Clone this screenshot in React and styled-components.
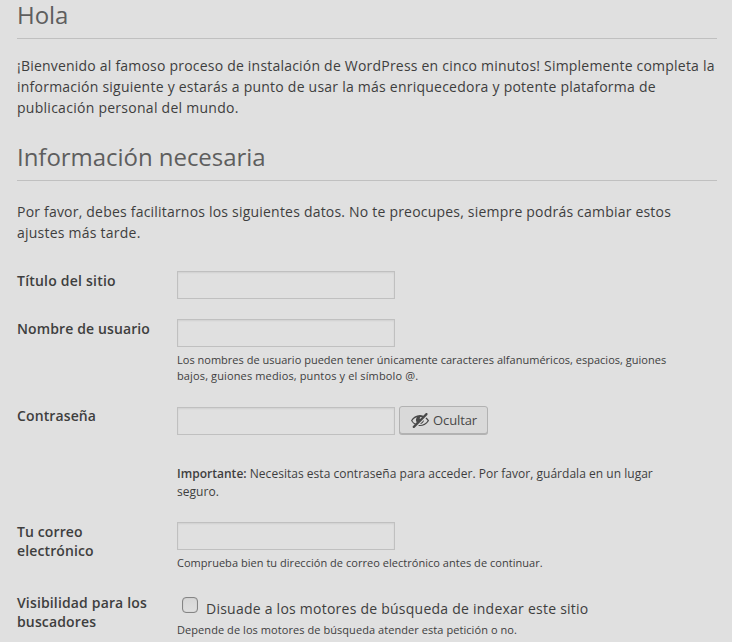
import React from "react";
import styled, { createGlobalStyle } from "styled-components";

const Global = createGlobalStyle`
  * { box-sizing: border-box; }
  html { background: #e0e0e0; }
  body { margin: 0; height: 642px; overflow: hidden; color: #3e3e3e; font: 14px/21px "Open Sans", sans-serif; }
`;
const Page = styled.main`width: 700px; margin-left: 17px;`;
const Heading = styled.h1`
  margin: 0; height: ${p => p.$height}px;
  border-bottom: 1px solid #c0c0c0; color: #5e5e5e; font-size: 24px; line-height: ${p => p.$line || 32}px;
  font-weight: 400; letter-spacing: -0.04px;
`;
const Intro = styled.p`margin: ${p => p.$top}px 0 ${p => p.$bottom}px; white-space: nowrap;`;
const Line = styled.span`display: block; letter-spacing: ${p => p.$track}px;`;
const Form = styled.form`display: flex; flex-direction: column;`;
const Row = styled.div`display: grid; grid-template-columns: 160px 1fr; height: ${p => p.$height}px;`;
const Label = styled.label`
  font-weight: 600; line-height: 19px; letter-spacing: ${p => p.$track || 0.12}px;
  margin-top: ${p => p.$shift || 0}px; white-space: nowrap;
`;
const Field = styled.div`display: flex; flex-direction: column; align-items: flex-start;`;
const Controls = styled.div`display: flex; height: 28px; gap: 4px;`;
const Input = styled.input`
  width: 218px; height: 28px; margin: 0; padding: 3px 5px; border: 1px solid #c0c0c0;
  border-radius: 0; background: #e0e0e0; box-shadow: inset 0 1px 2px rgba(0,0,0,.07); outline: none;
`;
const Button = styled.button`
  display: flex; align-items: center; gap: 3px; width: 89px; height: 28px; margin: -1px 0 0; padding: 0 0 0 10px;
  border: 1px solid #b2b2b2; border-radius: 3px; background: #d9d9d9; box-shadow: 0 1px 0 #b2b2b2;
  color: #484848; font: 13px/26px "Open Sans", sans-serif; letter-spacing: -0.1px;
`;
const Hint = styled.p`margin: ${p => p.$top}px 0 0; font-size: ${p => p.$size || 11}px; line-height: ${p => p.$line || 16}px; white-space: nowrap;`;
const CheckLine = styled.label`display: flex; align-items: flex-start; gap: 8px; padding: 4px 0 0 5px; line-height: 23px; letter-spacing: 0.24px;`;
const Check = styled.input`
  appearance: none; width: 16px; height: 16px; margin: 0; border: 1px solid #858585;
  border-radius: 4px; background: linear-gradient(#d7d7d7, #e0e0e0); box-shadow: inset 0 0 1px rgba(0,0,0,.3);
`;
const Strong = styled.strong`font-weight: 600;`;
const Icon = styled.svg`flex: none; width: 20px; height: 20px; fill: currentColor;`;

function HiddenIcon() {
  return (
    <Icon viewBox="0 0 20 20" aria-hidden="true">
      <path d="M17.3 3.3c-.4-.4-1.1-.4-1.6 0l-2.4 2.4c-1.1-.4-2.2-.6-3.3-.6-3.8.1-7.2 2.1-9 5.4.2.4.5.8.8 1.2.8 1.1 1.8 2 2.9 2.7L3 16.1c-.4.4-.5 1.1 0 1.6.4.4 1.1.5 1.6 0L17.3 4.9c.4-.5.4-1.2 0-1.6zm-10.6 9l-1.3 1.3c-1.2-.7-2.3-1.7-3.1-2.9C3.5 9 5.1 7.8 7 7.2c-1.3 1.4-1.4 3.6-.3 5.1zM10.1 9c-.5-.5-.4-1.3.1-1.8.5-.4 1.2-.4 1.7 0L10.1 9zm8.2.5c-.5-.7-1.1-1.4-1.8-1.9l-1 1c.8.6 1.5 1.3 2.1 2.2C15.9 13.4 13 15 9.9 15h-.8l-1 1c.7-.1 1.3 0 1.9 0 3.3 0 6.4-1.6 8.3-4.3.3-.4.5-.8.8-1.2-.3-.3-.5-.7-.8-1zM14 10l-4 4c2.2 0 4-1.8 4-4z" />
    </Icon>
  );
}

export default function App() {
  return (
    <>
      <Global />
      <Page>
        <Heading $height={39} $line={30}>Hola</Heading>
        <Intro $top={16} $bottom={23}>
          <Line $track={0.209}>¡Bienvenido al famoso proceso de instalación de WordPress en cinco minutos! Simplemente completa la</Line>
          <Line $track={0.235}>información siguiente y estarás a punto de usar la más enriquecedora y potente plataforma de</Line>
          <Line $track={0.27}>publicación personal del mundo.</Line>
        </Intro>
        <Heading as="h2" $height={40}>Información necesaria</Heading>
        <Intro $top={20} $bottom={28}>
          <Line $track={0.205}>Por favor, debes facilitarnos los siguientes datos. No te preocupes, siempre podrás cambiar estos</Line>
          <Line $track={0.235}>ajustes más tarde.</Line>
        </Intro>
        <Form>
          <Row $height={48}>
            <Label htmlFor="site" $track={0.22}>Título del sitio</Label>
            <Field><Input id="site" /></Field>
          </Row>
          <Row $height={88}>
            <Label htmlFor="user">Nombre de usuario</Label>
            <Field>
              <Input id="user" />
              <Hint $top={5}>
                <Line $track={0.012}>Los nombres de usuario pueden tener únicamente caracteres alfanuméricos, espacios, guiones</Line>
                <Line $track={0.13}>bajos, guiones medios, puntos y el símbolo @.</Line>
              </Hint>
            </Field>
          </Row>
          <Row $height={115}>
            <Label htmlFor="password" $shift={-1}>Contraseña</Label>
            <Field>
              <Controls>
                <Input id="password" />
                <Button type="button"><HiddenIcon />Ocultar</Button>
              </Controls>
              <Hint $top={30} $size={12} $line={18}>
                <Line $track={0.025}><Strong>Importante:</Strong> Necesitas esta contraseña para acceder. Por favor, guárdala en un lugar</Line>
                <Line $track={0.05}>seguro.</Line>
              </Hint>
            </Field>
          </Row>
          <Row $height={71}>
            <Label htmlFor="mail">Tu correo<br />electrónico</Label>
            <Field>
              <Input id="mail" />
              <Hint $top={5}><Line $track={0.035}>Comprueba bien tu dirección de correo electrónico antes de continuar.</Line></Hint>
            </Field>
          </Row>
          <Row $height={49}>
            <Label htmlFor="visibility" $track={0.15}>Visibilidad para los<br />buscadores</Label>
            <Field>
              <CheckLine><Check type="checkbox" id="visibility" />Disuade a los motores de búsqueda de indexar este sitio</CheckLine>
              <Hint $top={2}><Line $track={0.065}>Depende de los motores de búsqueda atender esta petición o no.</Line></Hint>
            </Field>
          </Row>
        </Form>
      </Page>
    </>
  );
}
